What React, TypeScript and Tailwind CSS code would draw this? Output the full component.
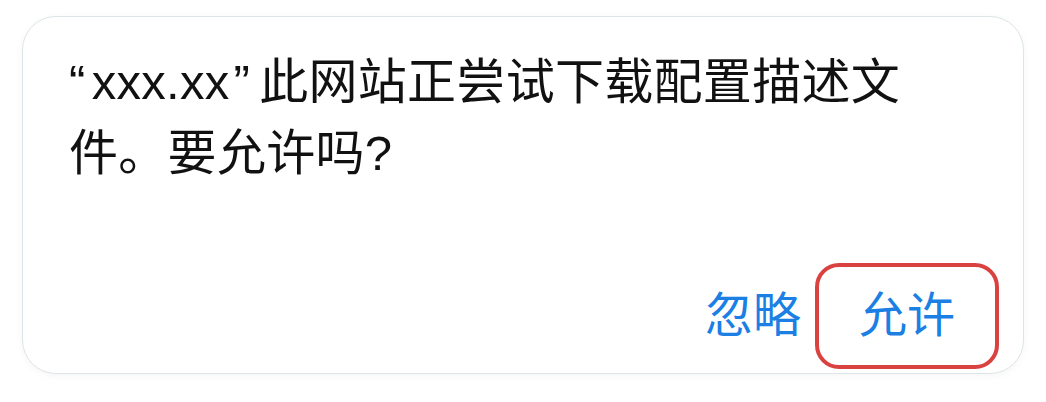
import React from 'react';

const FONT = '"Liberation Sans", "Noto Sans CJK SC", sans-serif';

export default function App() {
  return (
    <div className="w-[1046px] h-[402px] bg-white pt-[16px] pl-[22px]" style={{ fontFamily: FONT }}>
      <div className="w-[1002px] h-[358px] rounded-[34px] border border-[#dde5e8] bg-white shadow-[0_2px_8px_rgba(0,0,0,0.04)] flex flex-col">
        {/* Message */}
        <p className="pt-[30px] pl-[46px] text-[49px] leading-[71px] text-[#111] tracking-[0.3px]">
          <span className="mr-[6px]">“</span>xxx.xx<span className="ml-[4px] mr-[9px]">”</span>此网站正尝试下载配置描述文
          <br />
          件。要允许吗?
        </p>

        {/* Actions */}
        <div className="mt-auto flex items-center justify-end gap-[14px] pr-[24px] pb-[4px]">
          <button className="text-[48px] leading-none text-[#1b7fe3]">忽略</button>
          <button className="w-[184px] h-[106px] rounded-[24px] border-[4px] border-[#d9423f] flex items-center justify-center text-[48px] leading-none text-[#1b7fe3]">
            允许
          </button>
        </div>
      </div>
    </div>
  );
}
